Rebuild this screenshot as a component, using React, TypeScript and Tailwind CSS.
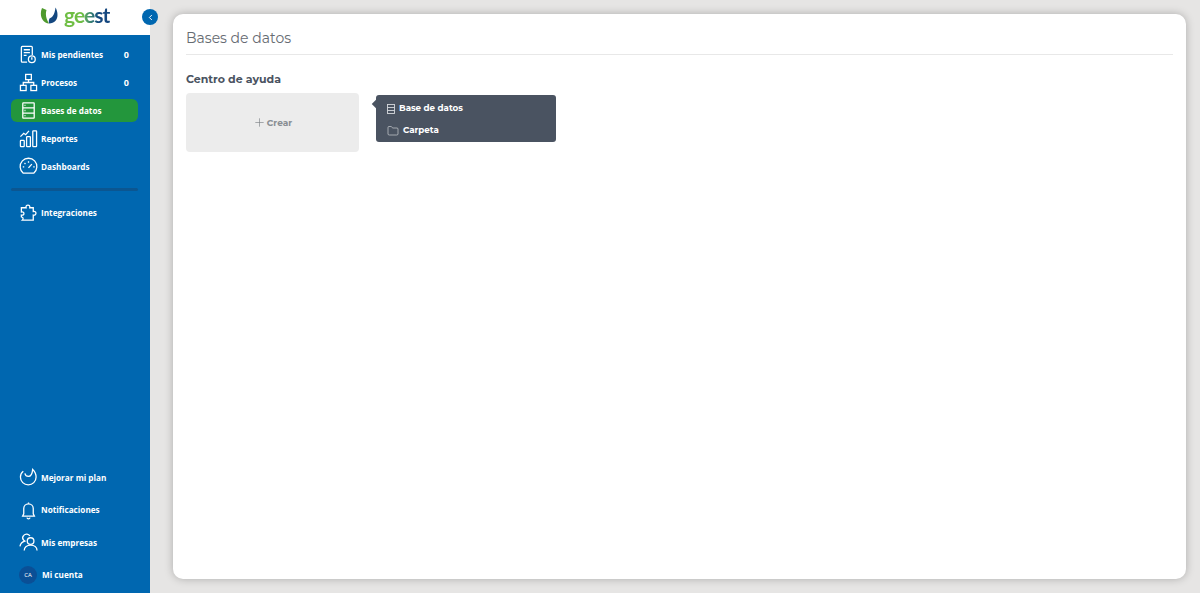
import { ChevronLeft, Folder, Plus } from 'lucide-react';
import type { ReactNode } from 'react';

const font = { fontFamily: 'Montserrat, Inter, "Liberation Sans", sans-serif' };
const navFont = { fontFamily: '"Open Sans", "Liberation Sans", sans-serif' };

function IconBox({ children }: { children: ReactNode }) {
  return (
    <svg viewBox="0 0 20 20" fill="none" stroke="currentColor" strokeWidth="1.35" className="h-[19px] w-[19px] shrink-0">
      {children}
    </svg>
  );
}

function PendingIcon() {
  return (
    <IconBox>
      <path d="M8.500 18H3.500a1 1 0 0 1-1-1V2.500a1 1 0 0 1 1-1h9.500a1 1 0 0 1 1 1V10.500" />
      <path d="M5 5h6.500M5 8h6.500M5 11h3" />
      <circle cx="13.500" cy="15" r="3.600" />
      <path d="M13.500 13v2.500" />
    </IconBox>
  );
}

function ProcessIcon() {
  return (
    <IconBox>
      <rect x="7" y="1.500" width="6" height="5.500" />
      <rect x="1.500" y="13" width="6" height="5.500" />
      <rect x="12.500" y="13" width="6" height="5.500" />
      <path d="M10 7v3M4.500 13v-3h11v3" />
    </IconBox>
  );
}

function DatabaseIcon() {
  return (
    <IconBox>
      <rect x="4" y="2" width="12" height="16" rx="0.500" />
      <path d="M4 7.300h12M4 12.700h12" />
      <path d="M5.800 4.600h1M5.800 10h1M5.800 15.400h1" />
    </IconBox>
  );
}

function ReportsIcon() {
  return (
    <IconBox>
      <rect x="1.500" y="12" width="4" height="6.500" rx="0.600" />
      <rect x="8" y="8" width="4" height="10.500" rx="0.600" />
      <rect x="14.500" y="2" width="4" height="16.500" rx="0.600" />
      <path d="M1.500 8 5 4.500l2 1.500 3.500-4" />
    </IconBox>
  );
}

function GaugeIcon() {
  return (
    <IconBox>
      <path d="M4.500 17a8.800 8.800 0 1 1 11 0Z" />
      <path d="M10 11.500 13.500 7.500" />
      <path d="M10 4.500v1.500M4 10.500h1.500M15 10.500h1.500M5.800 6.300l1 1" />
    </IconBox>
  );
}

function PuzzleIcon() {
  return (
    <IconBox>
      <path d="M2.500 5H7.500c-1-3.800 4.800-3.800 3.800 0H15v4c3.800-.9 3.800 4.600 0 3.700V18H3.500c1.500-1.500.8-3-1-3.500v-1.800c3.500 1 3.700-4 0-3.200Z" />
    </IconBox>
  );
}

function PlanIcon() {
  return (
    <IconBox>
      <path d="M4.500 3.500C2.500 5 1.500 7 1.500 9.600a8 8 0 0 0 16.500 0c0-3.400-1.400-6-3.600-8.100-.3 3.200-.7 7.400-4.400 7.400-2 0-3.400-1.200-3.800-3.200" />
    </IconBox>
  );
}

function BellIcon() {
  return (
    <IconBox>
      <path d="M10 3a5 5 0 0 0-5 5v5.500L3.800 16h12.400L15 13.500V8a5 5 0 0 0-5-5Z" />
      <path d="M10 1.500V3M8.300 17.500a1.800 1.800 0 0 0 3.400 0" />
    </IconBox>
  );
}

function CompaniesIcon() {
  return (
    <IconBox>
      <circle cx="12.200" cy="8.500" r="3.500" />
      <path d="M5.500 18.500c0-3.600 3-5.800 6.700-5.800s6.800 2.200 6.800 5.800" />
      <path d="M11.500 3.200A4 4 0 0 0 5 2.500c-1.300 1.300-1.300 3.600-.1 5 .3.400.8.700 1.200 1C3.500 9.300 1.500 11.300 1 14" />
    </IconBox>
  );
}

function NavItem({ icon, label, count, active }: { icon: ReactNode; label: string; count?: number; active?: boolean }) {
  return (
    <div className={`flex h-[23px] items-center rounded-md pl-[8px] pr-[9px] text-white ${active ? 'bg-[#23963c]' : ''}`} style={navFont}>
      <span className="flex w-[22px] shrink-0 items-center">{icon}</span>
      <span className="flex-1 pt-[1px] text-[8.2px] font-bold whitespace-nowrap">{label}</span>
      {count !== undefined ? <span className="pt-[1px] text-[9px] font-bold">{count}</span> : null}
    </div>
  );
}

function Logo() {
  return (
    <div className="flex h-[35px] items-center bg-white pb-[5px] pl-[40px]">
      <svg viewBox="0 0 18 17" className="h-[17px] w-[18px]">
        <path d="M2 1C-1 8 2 16 9 16.500 6.500 13 5 8 6.500 3Z" fill="#4f9a2d" />
        <path d="M9 16.500c5.500 0 8.500-4 8.500-8.500 0-3-.8-5.500-2-7.500-.7 5.500-2 9.500-6 11-.8 1.800-.8 3.500-.5 5Z" fill="#14477f" />
      </svg>
      <span
        className="ml-[6px] bg-gradient-to-r from-[#6fbe44] from-40% to-[#14477f] to-75% bg-clip-text pr-[1px] text-[21px] leading-[28px] font-bold tracking-[-1px] text-transparent"
        style={{ fontFamily: 'Lato, "Liberation Sans", sans-serif' }}
      >
        geest
      </span>
    </div>
  );
}

export default function App() {
  return (
    <div className="flex h-[593px] w-[1200px] overflow-hidden bg-[#e6e5e4]" style={font}>
      <aside className="relative flex w-[150px] shrink-0 flex-col bg-[#0067b0]">
        <Logo />
        <button className="absolute top-[9px] left-[142px] flex h-[16px] w-[16px] items-center justify-center rounded-full bg-[#0067b0] text-white">
          <ChevronLeft className="h-[9px] w-[9px]" strokeWidth={2.5} />
        </button>
        <nav className="flex flex-col gap-[5px] pt-[8px] pr-[12px] pl-[11px]">
          <NavItem icon={<PendingIcon />} label="Mis pendientes" count={0} />
          <NavItem icon={<ProcessIcon />} label="Procesos" count={0} />
          <NavItem icon={<DatabaseIcon />} label="Bases de datos" active />
          <NavItem icon={<ReportsIcon />} label="Reportes" />
          <NavItem icon={<GaugeIcon />} label="Dashboards" />
          <div className="mt-[5px] mb-[5px] h-[3px] rounded-full bg-[#0b5691]" />
          <NavItem icon={<PuzzleIcon />} label="Integraciones" />
        </nav>
        <div className="mt-auto flex flex-col gap-[9.5px] pr-[12px] pb-[6.5px] pl-[11px]">
          <NavItem icon={<PlanIcon />} label="Mejorar mi plan" />
          <NavItem icon={<BellIcon />} label="Notificaciones" />
          <NavItem icon={<CompaniesIcon />} label="Mis empresas" />
          <div className="flex h-[23px] items-center pl-[8px] text-white" style={navFont}>
            <span className="mr-[5px] flex h-[18px] w-[18px] items-center justify-center rounded-full bg-[#0a4f96] text-[6px]">CA</span>
            <span className="pt-[1px] text-[8.2px] font-bold">Mi cuenta</span>
          </div>
        </div>
      </aside>
      <main className="flex flex-1 py-[14px] pr-[14px] pl-[23px]">
        <div className="flex-1 rounded-[10px] bg-white px-[13px] shadow-[0_0_8px_rgba(0,0,0,0.25)]">
          <div className="flex h-[41px] items-end border-b border-[#e8e8e8] pb-[6px]">
            <h1 className="text-[14px] leading-[20px] text-[#666b72]">Bases de datos</h1>
          </div>
          <h2 className="mt-[16px] text-[11px] leading-[16px] font-bold text-[#4a5361]">Centro de ayuda</h2>
          <div className="mt-[6px] flex items-start gap-[17px]">
            <div className="flex h-[59px] w-[173px] items-center justify-center gap-[1px] rounded-sm bg-[#ececec] text-[#7d8287]">
              <Plus className="h-[13px] w-[13px]" strokeWidth={1.2} />
              <span className="text-[9px] font-bold text-[#8a8f94]">Crear</span>
            </div>
            <div className="relative mt-[2px] flex h-[47px] w-[180px] flex-col justify-center gap-[7px] rounded-[3px] bg-[#4a5361] pt-[3px] pl-[11px] text-[8.7px] font-bold text-white">
              <span className="absolute top-[6px] left-[-3px] h-[6px] w-[6px] rotate-45 bg-[#4a5361]" />
              <div className="flex h-[15px] items-center gap-[4px]">
                <svg viewBox="0 0 8 10" fill="none" stroke="#d5d8dc" strokeWidth="0.9" className="h-[10px] w-[8px]">
                  <rect x="0.500" y="0.500" width="7" height="9" />
                  <path d="M0.500 3.500h7M0.500 6.500h7" />
                </svg>
                Base de datos
              </div>
              <div className="flex h-[15px] items-center gap-[4px]">
                <Folder className="h-[12px] w-[12px] text-[#d5d8dc]" strokeWidth={1.3} />
                Carpeta
              </div>
            </div>
          </div>
        </div>
      </main>
    </div>
  );
}
